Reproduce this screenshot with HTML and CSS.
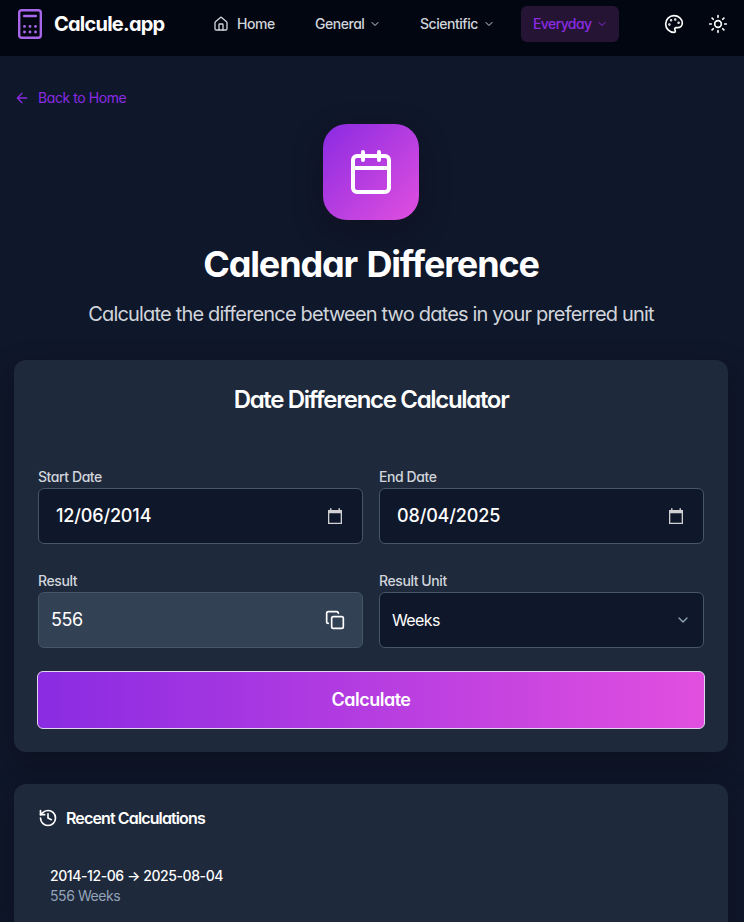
FILE: index.html
```html
<!DOCTYPE html>
<html lang="en">
  <head>
    <meta charset="UTF-8">
    <title>Calendar Difference - Calcule.app</title>
    <link rel="stylesheet" href="styles.css">
  </head>
  <body>
    <header class="navbar">
      <a class="brand" href="#">
        <svg class="brand-icon" viewBox="0 0 24 30">
          <rect x="1.2" y="1.2" width="21.6" height="27.6" rx="2.5" stroke-width="2.4" />
          <path d="M6.200 7h11.600" stroke-width="2.600" />
          <path d="M6.500 17.400h.01M12 17.400h.01M17.500 17.400h.01M6.500 23h.01M12 23h.01M17.500 23h.01" stroke-width="2.900" />
        </svg>
        <span class="brand-name">Calcule.app</span>
      </a>

      <nav class="menu">
        <a class="menu-item home" href="#">
          <svg class="icon-home" viewBox="0 0 24 24">
            <path d="M15 21v-8a1 1 0 0 0-1-1h-4a1 1 0 0 0-1 1v8" />
            <path d="M3 10a2 2 0 0 1 .709-1.528l7-5.999a2 2 0 0 1 2.582 0l7 5.999A2 2 0 0 1 21 10v9a2 2 0 0 1-2 2H5a2 2 0 0 1-2-2z" />
          </svg>
          Home
        </a>
        <a class="menu-item general" href="#">General <svg class="chevron" viewBox="0 0 24 24"><path d="m6 9 6 6 6-6" /></svg></a>
        <a class="menu-item scientific" href="#">Scientific <svg class="chevron" viewBox="0 0 24 24"><path d="m6 9 6 6 6-6" /></svg></a>
        <a class="menu-item active" href="#">Everyday <svg class="chevron" viewBox="0 0 24 24"><path d="m6 9 6 6 6-6" /></svg></a>
      </nav>

      <div class="tools">
        <button class="tool" type="button" aria-label="Theme color">
          <svg viewBox="0 0 24 24">
            <circle cx="13.5" cy="6.5" r=".5" fill="currentColor" />
            <circle cx="17.5" cy="10.5" r=".5" fill="currentColor" />
            <circle cx="8.5" cy="7.5" r=".5" fill="currentColor" />
            <circle cx="6.5" cy="12.5" r=".5" fill="currentColor" />
            <path d="M12 2C6.500 2 2 6.500 2 12s4.500 10 10 10c.926 0 1.648-.746 1.648-1.688 0-.437-.18-.835-.437-1.125-.29-.289-.438-.652-.438-1.125a1.640 1.640 0 0 1 1.668-1.668h1.996c3.051 0 5.555-2.503 5.555-5.554C21.965 6.012 17.461 2 12 2z" />
          </svg>
        </button>
        <button class="tool" type="button" aria-label="Toggle light mode">
          <svg viewBox="0 0 24 24">
            <circle cx="12" cy="12" r="4" />
            <path d="M12 2v2M12 20v2M4.930 4.930l1.410 1.410M17.660 17.660l1.410 1.410M2 12h2M20 12h2M6.340 17.660l-1.410 1.410M19.070 4.930l-1.410 1.410" />
          </svg>
        </button>
      </div>
    </header>

    <main class="page">
      <a class="back" href="#">
        <svg viewBox="0 0 24 24"><path d="m12 19-7-7 7-7M19 12H5" /></svg>
        <span>Back to Home</span>
      </a>

      <section class="hero">
        <div class="hero-icon">
          <svg viewBox="0 0 24 24"><path d="M8 2v4M16 2v4M3 10h18" /><rect x="3" y="4" width="18" height="18" rx="2" /></svg>
        </div>
        <h1>Calendar Difference</h1>
        <p>Calculate the difference between two dates in your preferred unit</p>
      </section>

      <section class="card calculator">
        <h2>Date Difference Calculator</h2>
        <form class="fields">
          <div class="field">
            <label>Start Date</label>
            <div class="control date">
              <span>12/06/2014</span>
              <svg class="picker" viewBox="0 0 16 18"><path d="M3 1.200h1.500V3h7V1.200H13V3h2v14H1V3h2zM2.300 6.200v9.500h11.400V6.200z" fill-rule="evenodd" /></svg>
            </div>
          </div>
          <div class="field">
            <label>End Date</label>
            <div class="control date">
              <span>08/04/2025</span>
              <svg class="picker" viewBox="0 0 16 18"><path d="M3 1.200h1.500V3h7V1.200H13V3h2v14H1V3h2zM2.300 6.200v9.500h11.400V6.200z" fill-rule="evenodd" /></svg>
            </div>
          </div>
          <div class="field">
            <label>Result</label>
            <div class="control result">
              <span>556</span>
              <svg class="copy" viewBox="0 0 24 24"><rect x="8" y="8" width="14" height="14" rx="2" /><path d="M4 16c-1.100 0-2-.9-2-2V4c0-1.100.9-2 2-2h10c1.100 0 2 .9 2 2" /></svg>
            </div>
          </div>
          <div class="field">
            <label>Result Unit</label>
            <div class="control unit">
              <span>Weeks</span>
              <svg class="select-arrow" viewBox="0 0 24 24"><path d="m6 9 6 6 6-6" /></svg>
            </div>
          </div>
          <button class="calculate" type="button">Calculate</button>
        </form>
      </section>

      <section class="card history">
        <h3>
          <svg viewBox="0 0 24 24"><path d="M3 12a9 9 0 1 0 9-9 9.750 9.750 0 0 0-6.740 2.740L3 8" /><path d="M3 3v5h5M12 7v5l4 2" /></svg>
          <span>Recent Calculations</span>
        </h3>
        <div class="entry">
          <div class="entry-dates">2014-12-06 → 2025-08-04</div>
          <div class="entry-result">556 Weeks</div>
        </div>
      </section>
    </main>
  </body>
</html>
```
FILE: styles.css
```css
* {
  box-sizing: border-box;
}

body {
  margin: 0;
  height: 100vh;
  display: flex;
  flex-direction: column;
  overflow: hidden;
  font-family: Inter, "Liberation Sans", sans-serif;
  font-feature-settings: "cv11";
  font-size: 14px;
  line-height: 20px;
  letter-spacing: -0.42px;
  background-color: #0f172a;
  color: #ffffff;
}

a {
  color: inherit;
  text-decoration: none;
}

svg {
  display: block;
  flex-shrink: 0;
  fill: none;
  stroke: currentColor;
  stroke-width: 2;
  stroke-linecap: round;
  stroke-linejoin: round;
}

button {
  font: inherit;
  font-feature-settings: inherit;
  color: inherit;
}

/* Top bar */
.navbar {
  display: flex;
  flex-shrink: 0;
  align-items: center;
  height: 56px;
  padding: 0 16px 8px 18px;
  background-color: #020611;
}

.brand {
  display: flex;
  align-items: center;
  gap: 12px;
  width: 183px;
}

.brand-icon {
  width: 24px;
  height: 30px;
  color: #a766e8;
}

.brand-name {
  font-size: 20px;
  font-weight: 700;
  letter-spacing: -0.77px;
}

.menu {
  display: flex;
  gap: 16px;
}

.menu-item {
  display: flex;
  align-items: center;
  gap: 5px;
  height: 36px;
  padding: 0 12px;
  border-radius: 6px;
  font-weight: 500;
  letter-spacing: -0.47px;
  color: #d1d5db;
}

.home {
  gap: 8px;
  width: 86px;
}

.general {
  width: 89px;
}

.scientific {
  width: 97px;
}

.menu-item.active {
  width: 98px;
  background-color: #251433;
  color: #8a2be2;
  letter-spacing: -0.6px;
}

.icon-home {
  width: 16px;
  height: 16px;
}

.chevron {
  width: 12px;
  height: 12px;
}

.tools {
  display: flex;
  gap: 24px;
  margin-left: auto;
}

.tool {
  padding: 0;
  border: none;
  background: none;
}

.tool svg {
  width: 20px;
  height: 20px;
}

/* Page */
.page {
  flex: 1;
  min-height: 0;
  display: flex;
  flex-direction: column;
  padding: 32px 16px 0 14px;
}

.back {
  display: flex;
  align-items: center;
  align-self: flex-start;
  gap: 8px;
  height: 20px;
  color: #8a2be2;
}

.back svg {
  width: 16px;
  height: 16px;
}

.hero {
  display: flex;
  flex-direction: column;
  align-items: center;
  padding-top: 16px;
}

.hero-icon {
  display: flex;
  align-items: center;
  justify-content: center;
  width: 96px;
  height: 96px;
  border-radius: 24px;
  background: linear-gradient(135deg, #8a2be2, #e14fdf);
  box-shadow: 0 10px 30px rgba(15, 12, 25, 0.4);
}

.hero-icon svg {
  width: 48px;
  height: 48px;
}

h1 {
  margin: 24px 0 0;
  font-size: 36px;
  line-height: 40px;
  font-weight: 700;
  letter-spacing: -1.15px;
  word-spacing: 2px;
}

.hero p {
  margin: 16px 0 0;
  font-size: 20px;
  line-height: 28px;
  letter-spacing: -0.82px;
  color: #d1d5db;
}

.card {
  flex-shrink: 0;
  border-radius: 12px;
  background-color: #1e293b;
  box-shadow: 0 12px 30px rgba(10, 10, 20, 0.45);
}

.calculator {
  height: 392px;
  margin-top: 32px;
  padding: 24px 23px;
}

h2 {
  margin: 0 0 47px;
  text-align: center;
  font-size: 24px;
  line-height: 32px;
  font-weight: 600;
  letter-spacing: -1.32px;
}

.fields {
  display: grid;
  grid-template-columns: 1fr 1fr;
  gap: 23px 16px;
}

.field {
  height: 81px;
  padding-top: 4px;
}

.field:nth-child(odd) {
  padding-left: 1px;
}

.field:nth-child(even) {
  padding-right: 1px;
}

label {
  display: block;
  height: 21px;
  font-weight: 500;
  color: #d1d5db;
}

.control {
  display: flex;
  align-items: center;
  justify-content: space-between;
  height: 56px;
  border: 1px solid #475569;
  border-radius: 6px;
  background-color: #0f172a;
  font-size: 16px;
}

.date {
  padding: 0 19px 0 17px;
  font-size: 18px;
  font-weight: 500;
  letter-spacing: -0.15px;
}

.picker {
  width: 16px;
  height: 18px;
  fill: #d1d1d4;
  stroke: none;
}

.result {
  padding: 0 17px 0 12px;
  background-color: #334155;
  font-size: 18px;
}

.copy {
  width: 20px;
  height: 20px;
}

.unit {
  padding: 0 12px;
  letter-spacing: -0.6px;
}

.select-arrow {
  width: 16px;
  height: 16px;
  color: #94a3b8;
}

.calculate {
  grid-column: 1 / -1;
  height: 58px;
  border: 1px solid #e2d5ee;
  border-radius: 6px;
  background: linear-gradient(90deg, #8a2be2, #e14fdf);
  font-size: 18px;
  font-weight: 600;
  letter-spacing: -0.5px;
}

/* Recent calculations */
.history {
  flex: 1;
  min-height: 0;
  margin-top: 32px;
  padding: 24px;
  border-radius: 12px 12px 0 0;
}

h3 {
  display: flex;
  align-items: center;
  gap: 8px;
  margin: 0;
  font-size: 16px;
  line-height: 20px;
  font-weight: 600;
  letter-spacing: -0.87px;
}

h3 svg {
  width: 20px;
  height: 20px;
}

.entry {
  margin-top: 38px;
  padding-left: 12px;
}

.entry-dates {
  font-weight: 500;
}

.entry-result {
  color: #94a3b8;
}
```
